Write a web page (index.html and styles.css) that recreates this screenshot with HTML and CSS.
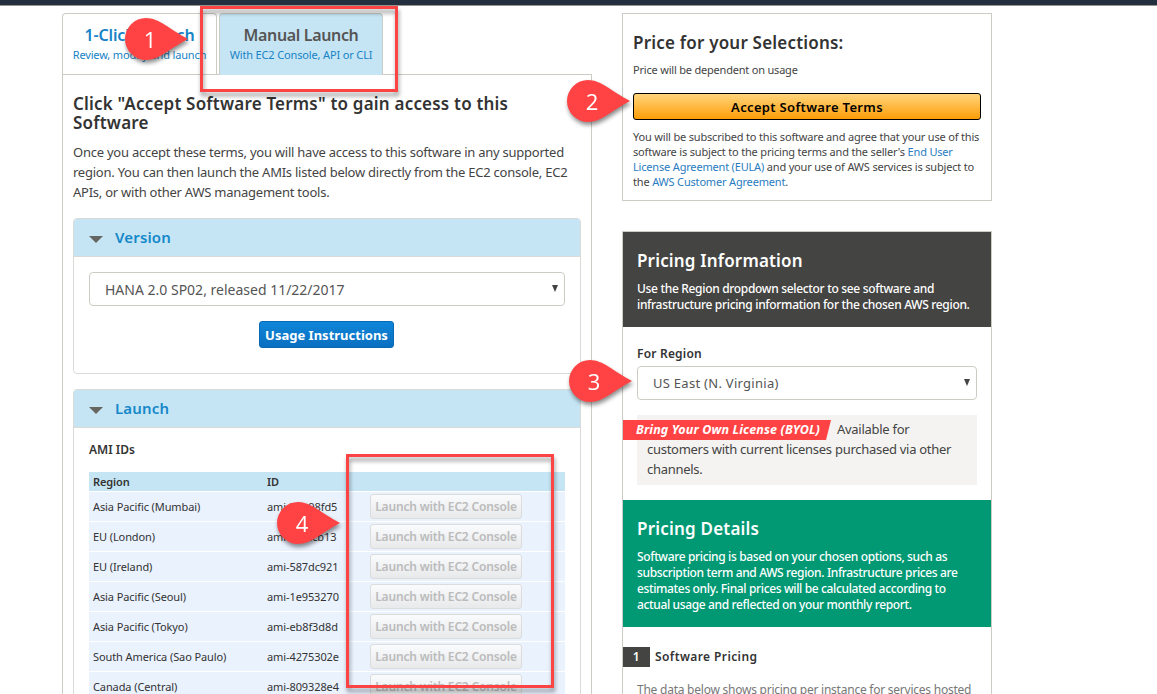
FILE: index.html
```html
<!DOCTYPE html>
<html lang="en">
<head>
<meta charset="utf-8">
<title>Manual Launch</title>
<link rel="stylesheet" href="styles.css">
</head>
<body>
<div class="topbar"></div>
<main class="page">
  <section class="left">
    <nav class="tabs">
      <a class="tab"><b>1-Click Launch</b><small>Review, modify and launch</small></a>
      <a class="tab active"><b>Manual Launch</b><small>With EC2 Console, API or CLI</small></a>
    </nav>
    <div class="content">
      <h2 class="headline">Click "Accept Software Terms" to gain access to this<br>Software</h2>
      <p class="intro">Once you accept these terms, you will have access to this software in any supported<br>region. You can then launch the AMIs listed below directly from the EC2 console, EC2<br>APIs, or with other AWS management tools.</p>

      <section class="panel version">
        <h3 class="panel-head"><svg class="caret" viewBox="0 0 14 7"><path d="M0 0H14L7 7Z"/></svg>Version</h3>
        <div class="panel-body">
          <div class="select"><span>HANA 2.0 SP02, released 11/22/2017</span><svg class="arrow" viewBox="0 0 6 7"><path d="M0 0H6L3 7Z"/></svg></div>
          <button class="usage">Usage Instructions</button>
        </div>
      </section>

      <section class="panel launch">
        <h3 class="panel-head"><svg class="caret" viewBox="0 0 14 7"><path d="M0 0H14L7 7Z"/></svg>Launch</h3>
        <div class="panel-body">
          <h4 class="ami-title">AMI IDs</h4>
          <div class="ami-table">
            <div class="row head"><span>Region</span><span>ID</span><span></span></div>
            <div class="row"><span>Asia Pacific (Mumbai)</span><span>ami-b4a98fd5</span><button class="ec2">Launch with EC2 Console</button></div>
            <div class="row"><span>EU (London)</span><span>ami-5f7dcb13</span><button class="ec2">Launch with EC2 Console</button></div>
            <div class="row"><span>EU (Ireland)</span><span>ami-587dc921</span><button class="ec2">Launch with EC2 Console</button></div>
            <div class="row"><span>Asia Pacific (Seoul)</span><span>ami-1e953270</span><button class="ec2">Launch with EC2 Console</button></div>
            <div class="row"><span>Asia Pacific (Tokyo)</span><span>ami-eb8f3d8d</span><button class="ec2">Launch with EC2 Console</button></div>
            <div class="row"><span>South America (Sao Paulo)</span><span>ami-4275302e</span><button class="ec2">Launch with EC2 Console</button></div>
            <div class="row"><span>Canada (Central)</span><span>ami-809328e4</span><button class="ec2">Launch with EC2 Console</button></div>
          </div>
        </div>
      </section>
    </div>
  </section>

  <aside class="right">
    <section class="price">
      <h2>Price for your Selections:</h2>
      <p class="depends">Price will be dependent on usage</p>
      <button class="accept">Accept Software Terms</button>
      <p class="legal">You will be subscribed to this software and agree that your use of this<br>software is subject to the pricing terms and the seller's <a>End User</a><br><a>License Agreement (EULA)</a> and your use of AWS services is subject to<br>the <a>AWS Customer Agreement</a>.</p>
    </section>

    <section class="pricing">
      <header class="band dark">
        <h2>Pricing Information</h2>
        <p>Use the Region dropdown selector to see software and<br>infrastructure pricing information for the chosen AWS region.</p>
      </header>
      <div class="region">
        <h4>For Region</h4>
        <div class="select us"><span>US East (N. Virginia)</span><svg class="arrow" viewBox="0 0 6 7"><path d="M0 0H6L3 7Z"/></svg></div>
        <p class="byol"><span class="ribbon">Bring Your Own License (BYOL)</span>Available for<br>customers with current licenses purchased via other<br>channels.</p>
      </div>
      <header class="band green">
        <h2>Pricing Details</h2>
        <p>Software pricing is based on your chosen options, such as<br>subscription term and AWS region. Infrastructure prices are<br>estimates only. Final prices will be calculated according to<br>actual usage and reflected on your monthly report.</p>
      </header>
      <h4 class="step"><span class="num">1</span>Software Pricing</h4>
      <p class="data">The data below shows pricing per instance for services hosted</p>
    </section>
  </aside>
</main>

<div class="frame frame-tab"></div>
<div class="frame frame-launch"></div>
<div class="pin pin1"><svg viewBox="0 0 63 42"><path d="M21 0C34 0 44 11 63 21C44 31 34 42 21 42A21 21 0 0 1 21 0Z"/></svg><span>1</span></div>
<div class="pin pin2"><svg viewBox="0 0 63 42"><path d="M21 0C34 0 44 11 63 21C44 31 34 42 21 42A21 21 0 0 1 21 0Z"/></svg><span>2</span></div>
<div class="pin pin3"><svg viewBox="0 0 63 42"><path d="M21 0C34 0 44 11 63 21C44 31 34 42 21 42A21 21 0 0 1 21 0Z"/></svg><span>3</span></div>
<div class="pin pin4"><svg viewBox="0 0 63 42"><path d="M21 0C34 0 44 11 63 21C44 31 34 42 21 42A21 21 0 0 1 21 0Z"/></svg><span>4</span></div>
</body>
</html>
```
FILE: styles.css
```css
* { box-sizing: border-box; }
html, body { height: 694px; overflow: hidden; }
body { margin: 0; position: relative; background: #fff; color: #333; font-family: "Noto Sans", "Open Sans", sans-serif; font-size: 13px; white-space: nowrap; }
h2, h3, h4, p { margin: 0; font-weight: 600; }
p { font-weight: 400; }
button { font-family: inherit; padding: 0; display: block; }
svg { display: block; }

.topbar { height: 6px; background: #232f3e; border-bottom: 1px solid #99938e; }
.page { display: flex; gap: 30px; height: 688px; overflow: hidden; padding: 7px 0 0 62px; align-items: flex-start; }
.left { width: 530px; }
.right { width: 370px; }

.tabs { display: flex; gap: 2px; height: 61px; }
.tab { height: 61px; width: 155px; border: 1px solid #ccccc4; border-bottom: 0; border-radius: 4px 4px 0 0; padding-top: 10px; text-align: center; color: #1683c6; }
.tab b { display: block; font-size: 16px; line-height: 22px; font-weight: 600; letter-spacing: -.12px; }
.tab small { display: block; font-size: 11px; line-height: 18px; letter-spacing: -.15px; }
.tab.active { width: 164px; height: 62px; background: #c6e5f4; z-index: 1; }
.tab.active b { color: #555; letter-spacing: -.35px; }

.content { border: 1px solid #ccccc4; height: 700px; padding: 19px 10px 0; }
.headline { font-size: 17px; line-height: 19px; letter-spacing: .2px; }
.intro { margin-top: 10px; line-height: 20px; letter-spacing: -.24px; color: #444; }

.panel { width: 508px; border: 1px solid #dadad6; border-radius: 4px; overflow: hidden; }
.version { height: 156px; margin-top: 16px; }
.launch { margin-top: 15px; height: 400px; }
.panel-head { display: flex; align-items: center; gap: 12px; height: 38px; padding: 0 0 2px 15px; background: #c6e5f4; border-bottom: 1px solid #dadad6; color: #1588c9; font-size: 15px; letter-spacing: .15px; }
.caret { width: 14px; height: 7px; margin-top: 5px; fill: #666660; }
.panel-body { padding: 15px; }

.select { display: flex; align-items: center; justify-content: space-between; width: 476px; height: 34px; padding: 0 6px 0 15px; border: 1px solid #ccccc4; border-radius: 4px; background: #fff; color: #555; font-size: 14px; }
.arrow { width: 6px; height: 7px; margin-top: -2px; fill: #444; }
.usage { width: 135px; height: 27px; margin: 15px auto 0 170px; border: 1px solid #0a69b4; border-radius: 3px; background: linear-gradient(#0f86d9, #0a6fc0); color: #fff; font-size: 13px; font-weight: 700; }

.ami-title { font-size: 12px; line-height: 18px; margin-top: -2px; }
.ami-table { width: 476px; margin-top: 13px; font-size: 11px; }
.row { display: grid; grid-template-columns: 174px 103px 152px; align-items: center; height: 30px; padding-left: 4px; border-top: 1px solid #fff; background: #eaf2fe; letter-spacing: -.1px; }
.row > span { margin-top: -1px; }
.row.head { height: 19px; border-top: 0; background: #c6e5f4; font-weight: 600; }
.ec2 { height: 25px; border: 1px solid #dcdcdc; border-radius: 3px; background: linear-gradient(#f9fbfd, #e8e9eb); color: #bbb; font-size: 12px; font-weight: 600; letter-spacing: -.17px; }

.price { border: 1px solid #ccccc4; height: 188px; padding: 17px 10px 0; }
.price h2 { font-size: 17px; line-height: 24px; letter-spacing: .2px; }
.depends { margin-top: 7px; font-size: 11px; line-height: 16px; letter-spacing: -.2px; color: #444; }
.accept { width: 348px; height: 27px; margin-top: 15px; border: 1px solid #000; border-radius: 3px; background: linear-gradient(#ffd57c, #ff9d08); color: #000; font-size: 13px; font-weight: 600; letter-spacing: .33px; }
.legal { margin-top: 9px; font-size: 11px; line-height: 15px; letter-spacing: -.18px; color: #444; }
.legal a { color: #2a7cc0; }

.pricing { margin-top: 30px; border: 1px solid #ccccc4; height: 600px; }
.band { color: #fff; padding: 16px 14px 0; }
.band h2 { font-size: 17px; line-height: 26px; letter-spacing: .17px; }
.band p { margin-top: 7px; font-size: 12px; line-height: 16px; font-weight: 500; letter-spacing: -.32px; }
.dark { height: 95px; background: #444442; }
.green { height: 127px; background: #009974; }
.green h2 { letter-spacing: .2px; }
.green p { letter-spacing: -.36px; }
.region { height: 173px; padding: 18px 14px 0; }
.region h4 { font-size: 12px; line-height: 18px; letter-spacing: .2px; }
.us { width: 340px; margin-top: 3px; font-size: 13px; letter-spacing: .28px; }
.byol { width: 340px; height: 70px; margin-top: 15px; padding: 4px 10px; background: #f4f3f1; line-height: 20px; letter-spacing: -.28px; color: #444; }
.ribbon { display: inline-block; width: 208px; height: 20px; margin: 1px 6px -1px -24px; padding-left: 13px; background: #ff4344; clip-path: polygon(0 0, 100% 0, calc(100% - 5px) 100%, 0 100%); color: #fff; font-size: 12.5px; line-height: 19px; font-weight: 700; font-style: italic; letter-spacing: .13px; vertical-align: top; }
.step { display: flex; align-items: center; gap: 5px; margin-top: 20px; font-size: 12px; line-height: 20px; letter-spacing: .4px; }
.num { width: 27px; background: #444442; color: #fff; text-align: center; }
.data { margin-top: 12px; padding-left: 14px; font-size: 12px; line-height: 22px; letter-spacing: -.24px; color: #777; }

/* callouts lying over the page */
.frame { position: absolute; border: 3px solid #fc4444; filter: drop-shadow(1px 4px 2px rgba(0, 0, 0, .4)); z-index: 2; }
.frame-tab { left: 200px; top: 6px; width: 198px; height: 86px; }
.frame-launch { left: 346px; top: 454px; width: 208px; height: 234px; }
.pin { position: absolute; width: 63px; height: 42px; z-index: 3; filter: drop-shadow(1px 3px 2px rgba(0, 0, 0, .45)); }
.pin svg { width: 63px; height: 42px; fill: #ff4344; }
.pin span { position: absolute; left: 4px; top: 0; width: 42px; line-height: 43px; text-align: center; color: #fff; font-family: "Open Sans", "Noto Sans", sans-serif; font-size: 22px; }
.pin1 { left: 125px; top: 18px; }
.pin2 { left: 567px; top: 80px; }
.pin3 { left: 569px; top: 360px; }
.pin4 { left: 277px; top: 502px; }
```
